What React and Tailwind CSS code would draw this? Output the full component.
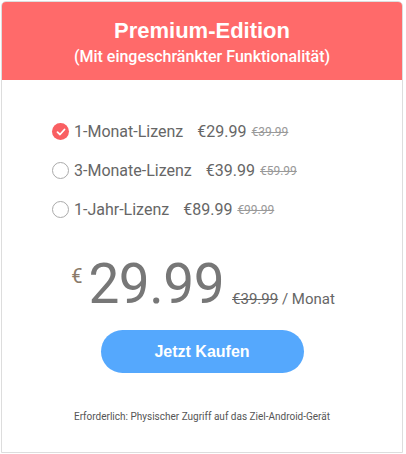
const plans = [
    { name: "1-Monat-Lizenz", price: "€29.99", old: "€39.99", checked: true },
    { name: "3-Monate-Lizenz", price: "€39.99", old: "€59.99" },
    { name: "1-Jahr-Lizenz", price: "€89.99", old: "€99.99" },
];

function Radio({ checked }) {
    if (checked) {
        return (
            <span className="flex h-[17px] w-[17px] items-center justify-center rounded-full bg-[#f95f62]">
                <svg width="10" height="10" viewBox="0 0 10 10" fill="none">
                    <path d="M1.5 5.2 L4 7.5 L8.5 2.5" stroke="white" strokeWidth="1.8" strokeLinecap="round" strokeLinejoin="round" />
                </svg>
            </span>
        );
    }
    return <span className="block h-[17px] w-[17px] rounded-full border border-[#aaa] bg-white" />;
}

export default function App() {
    return (
        <div className="h-[454px] w-[406px] bg-white p-px font-['Roboto',sans-serif]">
            <div className="flex h-[452px] w-[402px] flex-col overflow-hidden rounded-t-[5px] border border-[#ddd] bg-white">
                <div className="flex h-[78px] flex-col items-center bg-[#ff6a6a] pt-[14px] text-white">
                    <h1 className="text-[22px] font-bold leading-[30px] font-['Liberation_Sans',sans-serif]">Premium-Edition</h1>
                    <p className="mt-[1px] text-[16px] font-medium leading-[20px]">(Mit eingeschränkter Funktionalität)</p>
                </div>

                <div className="mt-[42px] flex flex-col gap-[20px] pl-[50px]">
                    {plans.map((p) => (
                        <label key={p.name} className="flex h-[19px] items-center text-[#666]">
                            <Radio checked={p.checked} />
                            <span className="ml-[5px] text-[16px]">{p.name}</span>
                            <span className="ml-[14px] text-[16px]">{p.price}</span>
                            <span className="ml-[5px] text-[12px] text-[#999] line-through">{p.old}</span>
                        </label>
                    ))}
                </div>

                <div className="mt-[37px] flex items-end justify-center pl-[2px] text-[#777]">
                    <span className="mb-[26px] mr-[6px] text-[20px] leading-none text-[#8a7a6a]">€</span>
                    <span className="text-[55px] leading-[56px] tracking-[-0.5px]">29.99</span>
                    <span className="mb-[5px] ml-[8px] text-[15px] leading-none text-[#666]">
                        <span className="line-through">€39.99</span> / Monat
                    </span>
                </div>

                <div className="mt-[18px] flex justify-center">
                    <button className="h-[43px] w-[203px] rounded-full bg-[#55a8fd] text-[16px] font-bold text-white font-['Liberation_Sans',sans-serif]">
                        Jetzt Kaufen
                    </button>
                </div>

                <p className="mt-[36px] text-center text-[10px] text-[#555]">
                    Erforderlich: Physischer Zugriff auf das Ziel-Android-Gerät
                </p>
            </div>
        </div>
    );
}
